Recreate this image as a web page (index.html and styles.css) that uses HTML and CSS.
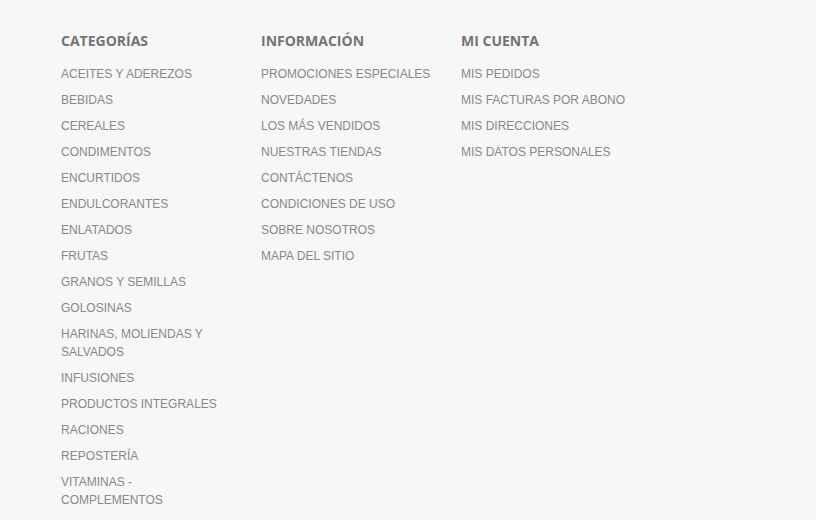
FILE: index.html
```html
<!DOCTYPE html>
<html lang="es">

<head>
    <meta charset="UTF-8">
    <title>Pie de página</title>
    <link rel="stylesheet" href="styles.css">
</head>

<body>
    <div class="footer">
        <div class="footer-col">
            <h4>CATEGORÍAS</h4>
            <ul>
                <li><a href="#">ACEITES Y ADEREZOS</a></li>
                <li><a href="#">BEBIDAS</a></li>
                <li><a href="#">CEREALES</a></li>
                <li><a href="#">CONDIMENTOS</a></li>
                <li><a href="#">ENCURTIDOS</a></li>
                <li><a href="#">ENDULCORANTES</a></li>
                <li><a href="#">ENLATADOS</a></li>
                <li><a href="#">FRUTAS</a></li>
                <li><a href="#">GRANOS Y SEMILLAS</a></li>
                <li><a href="#">GOLOSINAS</a></li>
                <li><a href="#">HARINAS, MOLIENDAS Y SALVADOS</a></li>
                <li><a href="#">INFUSIONES</a></li>
                <li><a href="#">PRODUCTOS INTEGRALES</a></li>
                <li><a href="#">RACIONES</a></li>
                <li><a href="#">REPOSTERÍA</a></li>
                <li><a href="#">VITAMINAS - COMPLEMENTOS</a></li>
            </ul>
        </div>
        <div class="footer-col">
            <h4>INFORMACIÓN</h4>
            <ul>
                <li><a href="#">PROMOCIONES ESPECIALES</a></li>
                <li><a href="#">NOVEDADES</a></li>
                <li><a href="#">LOS MÁS VENDIDOS</a></li>
                <li><a href="#">NUESTRAS TIENDAS</a></li>
                <li><a href="#">CONTÁCTENOS</a></li>
                <li><a href="#">CONDICIONES DE USO</a></li>
                <li><a href="#">SOBRE NOSOTROS</a></li>
                <li><a href="#">MAPA DEL SITIO</a></li>
            </ul>
        </div>
        <div class="footer-col">
            <h4>MI CUENTA</h4>
            <ul>
                <li><a href="#">MIS PEDIDOS</a></li>
                <li><a href="#">MIS FACTURAS POR ABONO</a></li>
                <li><a href="#">MIS DIRECCIONES</a></li>
                <li><a href="#">MIS DATOS PERSONALES</a></li>
            </ul>
        </div>
    </div>
</body>

</html>
```

FILE: styles.css
```css
* {
    margin: 0;
    padding: 0;
    box-sizing: border-box;
}

body {
    font-family: Arial, "Liberation Sans", sans-serif;
    background-color: #f7f7f7;
}

.footer {
    display: flex;
    padding: 31px 0 0 46px;
}

.footer-col {
    width: 200px;
    padding: 0 11px 0 15px;
}

.footer-col h4 {
    font-family: "Open Sans", sans-serif;
    font-size: 14px;
    font-weight: 700;
    line-height: 20px;
    color: #737373;
    margin-bottom: 14px;
}

.footer-col ul {
    list-style: none;
}

.footer-col li {
    font-size: 12px;
    line-height: 18px;
    margin-bottom: 8px;
}

.footer-col a {
    color: #888;
    text-decoration: none;
}
```
